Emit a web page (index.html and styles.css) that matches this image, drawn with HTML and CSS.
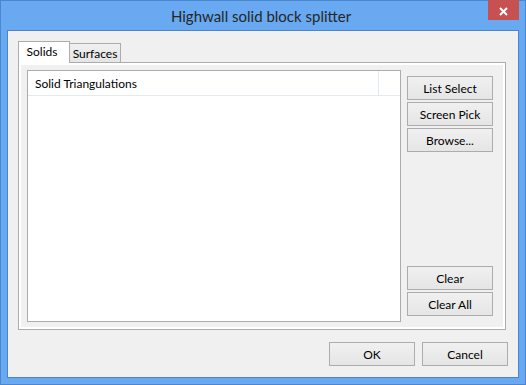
FILE: index.html
```html
<!DOCTYPE html>
<html lang="en">
<head>
  <meta charset="UTF-8" />
  <meta name="viewport" content="width=device-width, initial-scale=1.0">
  <title>Highwall solid block splitter</title>
  <link rel="stylesheet" href="styles.css">
</head>
<body>
  <div class="window">
    <div class="titlebar">
      <span class="title">Highwall solid block splitter</span>
      <button class="close" type="button" aria-label="Close">
        <svg width="31" height="20" viewBox="0 0 31 20">
          <path d="M12 8 L19 15 M19 8 L12 15" stroke="#fff" stroke-width="2" fill="none" />
        </svg>
      </button>
    </div>

    <div class="client">
      <div class="tabs">
        <div class="tab-strip">
          <div class="tab active">Solids</div>
          <div class="tab">Surfaces</div>
        </div>
        <div class="tab-panel">
          <div class="tab-page">
            <div class="list">
              <div class="list-header">
                <div class="col">Solid Triangulations</div>
                <div class="col filler"></div>
              </div>
            </div>
            <div class="side-buttons">
              <div class="group">
                <button type="button">List Select</button>
                <button type="button">Screen Pick</button>
                <button type="button">Browse...</button>
              </div>
              <div class="group">
                <button type="button">Clear</button>
                <button type="button">Clear All</button>
              </div>
            </div>
          </div>
        </div>
      </div>

      <div class="dialog-buttons">
        <button type="button">OK</button>
        <button type="button">Cancel</button>
      </div>
    </div>
  </div>
</body>
</html>
```

FILE: styles.css
```css
body {
  margin: 0;
  font-family: "Segoe UI", Lato, "Open Sans", sans-serif;
  font-size: 12px;
  color: #000;
}
.window {
  position: relative;
  width: 526px;
  height: 385px;
  box-sizing: border-box;
  border: 1px solid #4b86cf;
  background: #68a9f2;
  display: flex;
  flex-direction: column;
}
.titlebar {
  height: 29px;
  display: flex;
  align-items: center;
  justify-content: center;
}
.title {
  font-size: 15px;
  color: #262626;
  margin-right: 4px;
}
.close {
  position: absolute;
  top: -1px;
  left: 487px;
  width: 31px;
  height: 20px;
  padding: 0;
  border: none;
  background: #c75050;
}
.close svg {
  display: block;
}
.client {
  flex: 1;
  margin: 0 6px 6px;
  border: 1px solid #4e84c6;
  background: #f0f0f0;
  padding: 10px;
  display: flex;
  flex-direction: column;
}
.tabs {
  margin-right: 2px;
  height: 289px;
  display: flex;
  flex-direction: column;
}
.tab-strip {
  height: 21px;
  display: flex;
  align-items: flex-end;
}
.tab {
  box-sizing: border-box;
  width: 52px;
  height: 19px;
  border: 1px solid #acacac;
  border-bottom: none;
  background: linear-gradient(#f0f0f0, #e5e5e5);
  margin-left: -1px;
  display: flex;
  align-items: center;
  justify-content: center;
  padding-top: 1px;
}
.tab.active {
  position: relative;
  z-index: 1;
  height: 22px;
  margin-left: 0;
  margin-bottom: -1px;
  background: #fff;
  padding: 0 4px 2px 0;
}
.tab-panel {
  flex: 1;
  border: 1px solid #acacac;
  background: #fff;
  padding: 2px;
  display: flex;
}
.tab-page {
  flex: 1;
  background: #f0f0f0;
  padding: 5px 10px 5px 6px;
  display: flex;
  gap: 6px;
}
.list {
  width: 374px;
  box-sizing: border-box;
  border: 1px solid #acacac;
  background: #fff;
}
.list-header {
  height: 24px;
  border-bottom: 1px solid #e3e9f1;
  display: flex;
}
.list-header .col {
  width: 343px;
  padding-left: 7px;
  border-right: 1px solid #e3e9f1;
  display: flex;
  align-items: center;
}
.list-header .filler {
  flex: 1;
  border-right: none;
}
.side-buttons {
  padding: 6px 0;
  display: flex;
  flex-direction: column;
  justify-content: space-between;
}
.group {
  display: flex;
  flex-direction: column;
  gap: 2px;
}
button {
  width: 86px;
  height: 24px;
  box-sizing: border-box;
  border: 1px solid #acacac;
  background: linear-gradient(#f0f0f0, #e5e5e5);
  font-family: inherit;
  font-size: 12px;
  color: #000;
  padding: 0;
}
.dialog-buttons {
  margin-top: 12px;
  display: flex;
  justify-content: flex-end;
  gap: 7px;
}
```
